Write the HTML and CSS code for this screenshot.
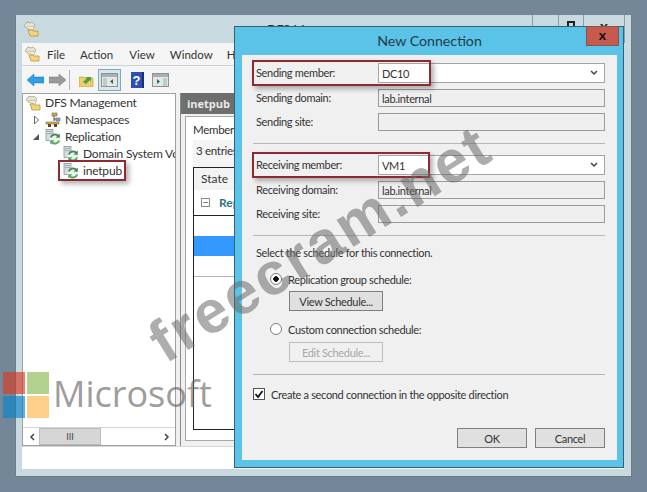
FILE: index.html
```html
<!DOCTYPE html>
<html>
  <head>
    <title>DFS Management</title>
    <link rel="stylesheet" href="styles.css">
  </head>
  <body>
    <svg class="defs" width="0" height="0">
      <symbol id="dfs" viewBox="0 0 16 16">
        <path d="M1 5 4 1l3 1 2-1 3 3-2 3-4 1z" fill="#e8e4d8" stroke="#a9a283" stroke-width=".8"/>
        <path d="M3 7l2-2 3 1 1-1 2 1-1 3z" fill="#f6f3ea" stroke="#b5ad8e" stroke-width=".7"/>
        <path d="M5 9h4l1 1h5v5H7z" fill="#f3d67c" stroke="#b8973f" stroke-width=".8"/>
      </symbol>
      <symbol id="ns" viewBox="0 0 16 16">
        <rect x="7" y="1" width="5" height="3" fill="#c9a860" stroke="#7d6a3a" stroke-width=".6"/>
        <rect x="11" y="6" width="4" height="3" fill="#8aa6c4" stroke="#56708c" stroke-width=".6"/>
        <path d="M9 4v5M9 7h2" stroke="#555" fill="none"/>
        <path d="M1 10h13v2H1z" fill="#e0b04e" stroke="#8a6a26" stroke-width=".6"/>
        <path d="M3 12h3v3H3zM9 12h3v3H9z" fill="#5d4a2a"/>
      </symbol>
      <symbol id="rep" viewBox="0 0 16 16">
        <rect x="1" y="0.500" width="7" height="11" fill="#d6dcdd" stroke="#7b8a8c" stroke-width=".7"/>
        <path d="M2 2.500h5M2 4.500h5" stroke="#8c9a9c" stroke-width=".7"/>
        <circle cx="10" cy="10" r="5.500" fill="#eef4ee"/>
        <path d="M5.800 8.500A4.500 4.500 0 0 1 13.500 7" fill="none" stroke="#3f8f4c" stroke-width="2"/>
        <path d="M14.800 4.500v4.300h-4.300z" fill="#3f8f4c"/>
        <path d="M14.200 11.500A4.500 4.500 0 0 1 6.500 13" fill="none" stroke="#5aa864" stroke-width="2"/>
        <path d="M5.200 15.500v-4.300h4.300z" fill="#5aa864"/>
      </symbol>
      <symbol id="chev" viewBox="0 0 8 6">
        <path d="M1 1l3 3 3-3" fill="none" stroke="#444" stroke-width="1.500"/>
      </symbol>
    </svg>

    <div class="main-win">
      <div class="titlebar">
        <svg class="ico16"><use href="#dfs"/></svg>
        <span class="title-text">DFS Management</span>
        <div class="caption">
          <div class="cap-btn cap-min"></div>
          <div class="cap-btn cap-max"><div class="max-box"></div></div>
          <div class="cap-btn cap-close">x</div>
        </div>
      </div>
      <div class="client">
        <div class="menubar">
          <svg class="ico16"><use href="#dfs"/></svg>
          <span class="m-file">File</span>
          <span class="m-action">Action</span>
          <span class="m-view">View</span>
          <span class="m-window">Window</span>
          <span>Help</span>
        </div>
        <div class="toolbar">
          <svg class="tb-arrow" viewBox="0 0 17 12"><path d="M0 6l7-6v3h10v6H7v3z" fill="#2f9fe0" stroke="#1f6fa8" stroke-width=".5"/></svg>
          <svg class="tb-arrow" viewBox="0 0 17 12"><path d="M17 6l-7-6v3H0v6h10v3z" fill="#9a9a9a" stroke="#777" stroke-width=".5"/></svg>
          <div class="tb-sep"></div>
          <svg class="tb-folder" viewBox="0 0 15 14"><path d="M0 4h5l1 1h8v9H0z" fill="#efcd6d" stroke="#b8973f" stroke-width=".6"/><path d="M4 9l4-4-2-1h6v5l-1-2-4 4z" fill="#4da23e"/></svg>
          <div class="tb-active">
            <svg class="tb-pane" viewBox="0 0 17 14"><rect x=".5" y=".5" width="16" height="13" fill="#e4e6e8" stroke="#8d9296"/><rect x="1" y="1" width="15" height="3" fill="#a9afb5"/><rect x="2" y="5" width="4" height="8" fill="#b8d0c4"/><path d="M12 6v5L9 8.500z" fill="#2c6d55"/></svg>
          </div>
          <svg class="tb-help" viewBox="0 0 13 16"><rect width="13" height="16" fill="#2d4fb0"/><rect x="11" width="2" height="16" fill="#18307c"/><text x="5.500" y="13" text-anchor="middle" class="help-q">?</text></svg>
          <svg class="tb-pane tb-action" viewBox="0 0 17 14"><rect x=".5" y=".5" width="16" height="13" fill="#e4e6e8" stroke="#8d9296"/><rect x="1" y="1" width="15" height="3" fill="#a9afb5"/><rect x="11" y="5" width="4" height="8" fill="#b8d0c4"/><path d="M5 6v5l3-2.500z" fill="#2c6d55"/></svg>
        </div>
        <div class="panes">
          <div class="tree">
            <div class="tree-list">
              <div class="t-row"><svg class="ico16"><use href="#dfs"/></svg>DFS Management</div>
              <div class="t-row t-l1"><svg class="tw" viewBox="0 0 15 10"><path d="M4.500 1l4 4-4 4z" fill="#fff" stroke="#666"/></svg><svg class="ico16"><use href="#ns"/></svg>Namespaces</div>
              <div class="t-row t-l1"><svg class="tw" viewBox="0 0 15 10"><path d="M9 2v6H3z" fill="#555"/></svg><svg class="ico16"><use href="#rep"/></svg>Replication</div>
              <div class="t-row t-l2"><svg class="ico16"><use href="#rep"/></svg>Domain System Volume</div>
              <div class="t-row t-l2 t-sel"><svg class="ico16"><use href="#rep"/></svg>inetpub</div>
            </div>
            <div class="hscroll">
              <div class="sb-btn"><svg class="sb-chev sb-left" viewBox="0 0 8 6"><use href="#chev"/></svg></div>
              <div class="sb-thumb">III</div>
              <div class="sb-track"></div>
              <div class="sb-btn"><svg class="sb-chev sb-right" viewBox="0 0 8 6"><use href="#chev"/></svg></div>
            </div>
          </div>
          <div class="detail">
            <div class="detail-head">inetpub</div>
            <div class="tabs">
              <div class="tab-label">Memberships</div>
              <div class="entries">3 entries</div>
              <div class="grid-box">
                <div class="grid-head">State</div>
                <div class="grid-group"><span class="minus"></span><b>Replicated Folder</b></div>
                <div class="grid-row"></div>
                <div class="grid-row grid-row-sel"></div>
                <div class="grid-row grid-row-end"></div>
              </div>
            </div>
          </div>
        </div>
        <div class="statusbar"></div>
      </div>
    </div>

    <div class="dialog">
      <div class="dlg-title">New Connection</div>
      <div class="dlg-close"><span>x</span></div>
      <div class="dlg-body">
        <div class="fields">
          <label>Sending member:</label>
          <div class="combo">DC10<svg class="combo-chev"><use href="#chev"/></svg></div>
          <label>Sending domain:</label>
          <div class="field">lab.internal</div>
          <label>Sending site:</label>
          <div class="field"></div>
        </div>
        <div class="rule"></div>
        <div class="fields">
          <label>Receiving member:</label>
          <div class="combo">VM1<svg class="combo-chev"><use href="#chev"/></svg></div>
          <label>Receiving domain:</label>
          <div class="field">lab.internal</div>
          <label>Receiving site:</label>
          <div class="field"></div>
        </div>
        <div class="rule"></div>
        <div class="sched-title">Select the schedule for this connection.</div>
        <div class="radio-row first-radio"><span class="radio on"></span>Replication group schedule:</div>
        <div class="btn sched-btn">View Schedule...</div>
        <div class="radio-row"><span class="radio"></span>Custom connection schedule:</div>
        <div class="btn sched-btn btn-off">Edit Schedule...</div>
        <div class="rule rule-last"></div>
        <div class="check-row">
          <svg class="check" viewBox="0 0 12 12"><rect x=".5" y=".5" width="11" height="11" fill="#fff" stroke="#555"/><path d="M2.500 6l2.500 3 4.500-6" fill="none" stroke="#111" stroke-width="1.800"/></svg>
          Create a second connection in the opposite direction
        </div>
        <div class="dlg-buttons">
          <div class="btn btn-main">OK</div>
          <div class="btn btn-main">Cancel</div>
        </div>
      </div>
      <div class="redbox red-send"></div>
      <div class="redbox red-recv"></div>
    </div>

    <div class="ms-logo">
      <div class="ms-squares">
        <div class="sq sq-r"></div>
        <div class="sq sq-g"></div>
        <div class="sq sq-b"></div>
        <div class="sq sq-y"></div>
      </div>
      <span class="ms-text">Microsoft</span>
    </div>
    <div class="watermark">freecram.net</div>
  </body>
</html>
```

FILE: styles.css
```css
body {
  margin: 0;
  width: 647px;
  height: 492px;
  overflow: hidden;
  position: relative;
  background: #748798;
  font-family: Lato, "Liberation Sans", sans-serif;
  font-size: 12px;
  color: #333;
}
.defs { position: absolute; }
.ico16 { width: 16px; height: 16px; flex: none; }

/* main mmc window */
.main-win {
  position: absolute;
  left: 15px;
  top: 15px;
  width: 617px;
  height: 462px;
  box-sizing: border-box;
  background: #c8d9e0;
  border: 1px solid #6d7d88;
  border-width: 0 1px 1px 1px;
  display: flex;
  flex-direction: column;
}
.titlebar {
  height: 28px;
  flex: none;
  display: flex;
  align-items: center;
  padding-left: 7px;
}
.title-text {
  margin-left: 228px;
  margin-top: 2px;
  font-size: 12.500px;
}
.caption {
  margin-left: auto;
  margin-right: 6px;
  align-self: stretch;
  display: flex;
}
.cap-btn {
  box-sizing: border-box;
  border-left: 1px solid #8d9ba3;
  text-align: center;
}
.cap-min { width: 26px; }
.cap-max { width: 25px; padding-top: 6px; }
.max-box {
  width: 8px;
  height: 8px;
  border: 2px solid #222;
  box-sizing: border-box;
  margin: 0 auto;
}
.cap-close {
  width: 42px;
  border-right: 1px solid #8d9ba3;
  font-weight: bold;
  font-size: 15px;
  line-height: 22px;
  color: #222;
}
.client {
  flex: 1;
  margin: 0 7px 7px 6px;
  display: flex;
  flex-direction: column;
  background: #fff;
  min-height: 0;
}
.menubar {
  height: 22px;
  flex: none;
  display: flex;
  align-items: center;
  padding-left: 2px;
  background: #f5f5f5;
  border-bottom: 1px solid #cfd3d6;
  font-size: 11.500px;
}
.menubar .ico16 { margin-right: 7px; }
.m-file { margin-right: 15px; }
.m-action { margin-right: 16px; }
.m-view { margin-right: 15px; }
.m-window { margin-right: 14px; }
.toolbar {
  height: 27px;
  flex: none;
  display: flex;
  align-items: center;
  padding-left: 5px;
  background: #f5f5f5;
}
.tb-arrow { width: 17px; height: 12px; margin-right: 5px; }
.tb-sep { width: 1px; height: 20px; background: #b5b5b5; margin: 0 9px 0 -2px; }
.tb-folder { width: 15px; height: 14px; margin-right: 4px; }
.tb-active {
  width: 23px;
  height: 22px;
  box-sizing: border-box;
  border: 1px solid #7fa8bf;
  background: #d9e6ee;
  display: flex;
  align-items: center;
  justify-content: center;
  margin-right: 10px;
}
.tb-pane { width: 17px; height: 14px; }
.tb-help { width: 13px; height: 16px; margin-right: 8px; }
.help-q { font: bold 13px "Liberation Sans", sans-serif; fill: #fff; }

.panes {
  flex: 1;
  min-height: 0;
  display: flex;
  background: #f0f0f0;
}
.tree {
  width: 154px;
  flex: none;
  box-sizing: border-box;
  background: #fff;
  border: 1px solid #a0a0a0;
  display: flex;
  flex-direction: column;
  overflow: hidden;
}
.tree-list {
  flex: 1;
  overflow: hidden;
}
.t-row {
  height: 17px;
  display: flex;
  align-items: center;
  white-space: nowrap;
  padding-left: 2px;
  font-size: 12px;
  letter-spacing: -.2px;
}
.t-row .ico16 { margin-right: 4px; }
.t-l1 { padding-left: 7px; }
.t-l2 { padding-left: 40px; }
.tw {
  width: 15px;
  height: 10px;
  flex: none;
}
.t-sel { position: relative; }
.t-sel::after {
  content: "";
  position: absolute;
  left: 35px;
  top: -2px;
  width: 68px;
  height: 21px;
  box-sizing: border-box;
  border: 2px solid #8f2a32;
  box-shadow: 3px 3px 5px rgba(0, 0, 0, .3);
}
.hscroll {
  height: 17px;
  flex: none;
  display: flex;
  background: #fff;
  border-top: 1px solid #d4d4d4;
  padding: 0 1px;
}
.sb-btn {
  width: 15px;
  flex: none;
  display: flex;
  align-items: center;
  justify-content: center;
}
.sb-chev { width: 8px; height: 6px; }
.sb-left { transform: rotate(90deg); }
.sb-right { transform: rotate(-90deg); }
.sb-thumb {
  width: 62px;
  flex: none;
  box-sizing: border-box;
  background: #d6d6d6;
  border: 1px solid #bdbdbd;
  text-align: center;
  font-size: 9px;
  line-height: 15px;
  color: #444;
}
.sb-track { flex: 1; }

.detail {
  flex: 1;
  margin-left: 4px;
  min-width: 0;
  display: flex;
  flex-direction: column;
  overflow: hidden;
  border-left: 1px solid #8a8a8a;
}
.detail-head {
  height: 21px;
  flex: none;
  background: #6e6e6e;
  color: #e8e8e8;
  font-family: "Open Sans", sans-serif;
  font-weight: bold;
  font-size: 11px;
  line-height: 21px;
  padding-left: 6px;
  margin-bottom: 2px;
}
.tabs {
  flex: 1;
  margin: 0 0 5px 4px;
  padding: 3px 0 10px 7px;
  box-sizing: border-box;
  background: #fff;
  border: 1px solid #a8a8a8;
  display: flex;
  flex-direction: column;
  min-height: 0;
  white-space: nowrap;
  font-size: 11.500px;
  letter-spacing: -.3px;
}
.tab-label { height: 20px; line-height: 20px; }
.entries { height: 27px; line-height: 22px; padding-left: 3px; background: #f4f4f4; }
.grid-box {
  flex: 1;
  border: 1px solid #222;
  display: flex;
  flex-direction: column;
  overflow: hidden;
  background: #fff;
}
.grid-head {
  height: 22px;
  flex: none;
  background: #f3f3f3;
  padding-left: 7px;
  line-height: 22px;
  font-size: 12px;
  letter-spacing: 0;
}
.grid-group {
  height: 26px;
  flex: none;
  box-sizing: border-box;
  border-bottom: 1px solid #222;
  display: flex;
  align-items: center;
  padding-left: 7px;
  color: #2f7384;
  font-size: 12px;
  letter-spacing: 0;
}
.minus {
  width: 7px;
  height: 7px;
  border: 1px solid #8a8a8a;
  background: linear-gradient(#8a8a8a, #8a8a8a) center / 5px 1px no-repeat;
  margin-right: 9px;
}
.grid-row { height: 20px; flex: none; }
.grid-row-sel { background: #3399ff; }
.grid-row-end { border-bottom: 1px solid #b5b5b5; }
.statusbar {
  height: 22px;
  flex: none;
  background: #fff;
  border-top: 1px solid #d8d8d8;
}

/* dialog */
.dialog {
  position: absolute;
  left: 234px;
  top: 26px;
  width: 390px;
  height: 442px;
  box-sizing: border-box;
  background: #5cc3e8;
  border: 1px solid #2f6478;
  padding: 0 6px 7px 7px;
  display: flex;
  flex-direction: column;
}
.dlg-title {
  height: 28px;
  flex: none;
  text-align: center;
  line-height: 27px;
  font-size: 14.200px;
  color: #1f3b4a;
}
.dlg-close {
  position: absolute;
  left: 351px;
  top: -1px;
  width: 33px;
  height: 20px;
  background: #c75a4c;
  border: 1px solid #7d5650;
  box-sizing: border-box;
  text-align: center;
  font-weight: bold;
  font-size: 14px;
  line-height: 15px;
  color: #111;
}
.dlg-body {
  flex: 1;
  background: #f0f0f0;
  padding: 8px 12px 0 14px;
  font-size: 11px;
  letter-spacing: -.33px;
}
.fields {
  display: grid;
  grid-template-columns: 122px 1fr;
  grid-template-rows: 20px 18px 18px;
  row-gap: 6px;
}
.fields label {
  display: flex;
  align-items: center;
  margin-top: -1px;
}
.combo, .field {
  box-sizing: border-box;
  padding-left: 3px;
  display: flex;
  align-items: center;
}
.combo {
  background: #fff;
  border: 1px solid #a5a5a5;
}
.combo-chev { width: 8px; height: 6px; margin-left: auto; margin-right: 6px; }
.field {
  background: #efefef;
  border: 1px solid #9a9a9a;
}
.rule {
  height: 1px;
  background: #b5b8b8;
  margin: 12px 0 11px -3px;
}
.rule + .sched-title { margin-top: -2px; }
.sched-title {
  height: 16px;
  line-height: 16px;
}
.radio-row {
  height: 16px;
  margin-top: 10px;
  display: flex;
  align-items: center;
  padding-left: 14px;
}
.radio {
  width: 12px;
  height: 12px;
  box-sizing: border-box;
  border: 1px solid #7d7d7d;
  border-radius: 50%;
  background: #fff;
  margin-right: 6px;
  flex: none;
}
.radio.on {
  background: radial-gradient(circle, #111 0 2.500px, #fff 3px);
}
.btn {
  box-sizing: border-box;
  display: flex;
  align-items: center;
  justify-content: center;
  height: 20px;
  background: #e0e0e0;
  border: 1px solid #7f7f7f;
}
.sched-btn { width: 94px; margin: 4px 0 0 33px; }
.btn-off {
  margin-top: 5px;
  background: #f0f0f0;
  border-color: #bdbdbd;
  color: #a8a8a8;
}
.check-row {
  height: 16px;
  display: flex;
  align-items: center;
  margin-left: -3px;
}
.check { width: 12px; height: 12px; margin-right: 6px; flex: none; }
.dlg-buttons {
  display: flex;
  justify-content: flex-end;
  gap: 8px;
  margin-top: 26px;
}
.btn-main { width: 70px; }
.redbox {
  position: absolute;
  box-sizing: border-box;
  border: 2px solid #8f2a32;
  box-shadow: 3px 3px 5px rgba(0, 0, 0, .3);
  left: 17px;
  width: 179px;
  height: 26px;
}
.red-send { top: 33px; }
.red-recv { top: 125px; width: 178px; }

/* overlays */
.ms-logo {
  position: absolute;
  left: 3px;
  top: 372px;
  display: flex;
  align-items: flex-start;
  opacity: .65;
}
.ms-squares {
  width: 46px;
  display: grid;
  grid-template-columns: 22px 22px;
  gap: 2px;
}
.sq { height: 22px; }
.sq-r { background: #d83b25; }
.sq-g { background: #8cbb55; }
.sq-b { background: #0a84c8; }
.sq-y { background: #fdb64a; }
.ms-text {
  margin: 0 0 0 4px;
  font-family: "Open Sans", sans-serif;
  font-size: 36px;
  line-height: 44px;
  color: #6a6a6a;
}
.watermark {
  position: absolute;
  left: 125px;
  top: 209px;
  font: bold 60px "Liberation Sans", sans-serif;
  letter-spacing: 2.500px;
  white-space: nowrap;
  color: rgba(105, 105, 105, .55);
  transform: rotate(-32deg);
}
```
